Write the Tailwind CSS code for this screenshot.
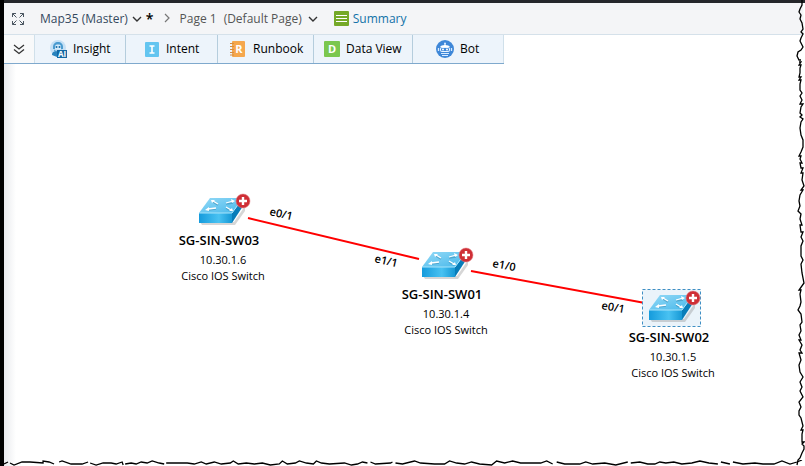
<!doctype html>
<html lang="en">
<head>
  <meta charset="UTF-8">
  <meta name="viewport" content="width=device-width, initial-scale=1.0">
  <title>Map35</title>
  <script src="https://cdn.jsdelivr.net/npm/@tailwindcss/browser@4"></script>
</head>
<body class="relative flex min-h-screen flex-col overflow-hidden border-l-4 border-black bg-white font-['Open_Sans',sans-serif] text-xs leading-5 text-black">
  <!-- Breadcrumb -->
  <header class="flex h-[35px] items-center border-t-3 border-b border-t-[#25272b] border-b-[#d5e1ea] bg-[#f4f5f7] pl-2 text-[#34495e]">
    <button aria-label="Full screen" class="mr-4 h-3 w-3">
      <svg class="h-3 w-3" viewBox="0 0 12 12" fill="none" stroke="#4a5560">
        <path d="M.5 4V.5H4M.5.5l4 4M8 .5h3.500V4M11.500.5l-4 4M.5 8v3.500H4M.5 11.500l4-4M8 11.500h3.500V8M11.500 11.500l-4-4"/>
      </svg>
    </button>
    <button class="flex items-center gap-1">
      Map35 (Master)
      <svg class="h-3 w-[10px]" viewBox="0 0 10 12" fill="none" stroke="#333" stroke-width="1.400"><path d="M1 4l4 4 4-4"/></svg>
    </button>
    <span class="ml-1 text-sm font-semibold text-black">*</span>
    <svg class="mr-[6px] ml-2 h-3 w-3" viewBox="0 0 12 12" fill="none" stroke="#777" stroke-width="1.200"><path d="M3 1l4 4-4 4"/></svg>
    <button class="flex items-center gap-1 text-[#555]">
      <span class="mr-[3px]">Page 1</span>
      <span>(Default Page)</span>
      <svg class="ml-[2px] h-3 w-[10px]" viewBox="0 0 10 12" fill="none" stroke="#333" stroke-width="1.400"><path d="M1 4l4 4 4-4"/></svg>
    </button>
    <a href="#" class="ml-4 flex items-center gap-1 text-[#1272a8]">
      <svg class="h-[15px] w-[15px]" viewBox="0 0 15 15">
        <rect width="15" height="15" rx="1" fill="#75a928"/>
        <path d="M2 4.500h11M2 7.500h11M2 10.500h11" stroke="#fff"/>
      </svg>
      Summary
    </a>
  </header>

  <!-- Toolbar -->
  <nav class="flex h-[29px] self-start border-b border-[#7fa9cd] bg-[#edf4fb]">
    <button aria-label="Collapse" class="flex w-[31px] items-center justify-center border-r border-[#d0e0ea] bg-[#f8f9fa]">
      <svg class="h-3 w-3" viewBox="0 0 12 12" fill="none" stroke="#333" stroke-width="1.300"><path d="M1 2l5 4 5-4M1 6.500l5 4 5-4"/></svg>
    </button>
    <button class="flex w-[91px] items-center gap-[6px] border-r border-[#b5cddd] pl-[15px]">
      <svg class="h-[18px] w-[17px]" viewBox="0 0 17 18">
        <circle cx="8" cy="8" r="8" fill="#c5e0f5"/>
        <path d="M3 7c0-3 2-5 5-5s5 2 5 5v2H3z" fill="#4a9bd0"/>
        <path d="M5 7c0-2 1-2.500 3-2.500S11 5 11 7v2H5z" fill="#d3eafa"/>
        <circle cx="6.500" cy="7" r="1" fill="#176ca9"/><circle cx="9.500" cy="7" r="1" fill="#176ca9"/>
        <path d="M2 15c0-3 2-4 5-4v6z" fill="#2983bd"/>
        <path d="M4 10c2 2 6 2 8 0" fill="none" stroke="#4a9bd0"/>
        <rect x="7" y="10" width="10" height="8" fill="#1267a3"/>
        <text x="12" y="17" fill="#fff" font-size="8" font-weight="700" text-anchor="middle">AI</text>
      </svg>
      Insight
    </button>
    <button class="flex w-[92px] items-center gap-[7px] border-r border-[#b5cddd] pl-[19px]">
      <svg class="h-[15px] w-[14px]" viewBox="0 0 14 15">
        <rect width="14" height="15" rx="1" fill="#63c5f0"/>
        <path d="M4.500 4h5M7 4v7M4.500 11h5" stroke="#fff" stroke-width="1.600"/>
      </svg>
      Intent
    </button>
    <button class="flex w-[96px] items-center gap-2 border-r border-[#b5cddd] pl-3">
      <svg class="h-4 w-[15px]" viewBox="0 0 15 16">
        <rect x="2" width="13" height="16" rx="1" fill="#f5a74d"/>
        <path d="M0 2.500h4M0 5.500h4M0 8.500h4M0 11.500h4M0 14h4" stroke="#d28c45"/>
        <text x="9" y="12" fill="#fff" font-size="11" font-weight="700" text-anchor="middle">R</text>
      </svg>
      Runbook
    </button>
    <button class="flex w-[99px] items-center gap-[6px] border-r border-[#b5cddd] pl-[10px]">
      <svg class="h-4 w-4" viewBox="0 0 16 16">
        <rect width="16" height="16" rx="1" fill="#7ac74f"/>
        <text x="8" y="12" fill="#fff" font-size="11" font-weight="700" text-anchor="middle">D</text>
      </svg>
      Data View
    </button>
    <button class="flex w-[91px] items-center gap-[6px] border-r border-[#d0e0ea] pl-[23px]">
      <svg class="h-[18px] w-[18px]" viewBox="0 0 18 18">
        <circle cx="9" cy="9" r="9" fill="#3e87d8"/>
        <path d="M9 3v3M2.500 8v3M15.500 8v3" stroke="#d8ebff" stroke-width="1.300"/>
        <circle cx="9" cy="3.500" r="1" fill="#d8ebff"/>
        <path d="M4 7q1-2 5-2t5 2z" fill="#fff"/>
        <rect x="4" y="7" width="10" height="5" rx="2" fill="#e8f4ff"/>
        <rect x="5" y="8" width="8" height="3" rx="1" fill="#3e87d8"/>
        <circle cx="7" cy="9.500" r="1" fill="#fff"/><circle cx="11" cy="9.500" r="1" fill="#fff"/>
        <path d="M5 13.500h8M6 15.500h6" stroke="#d8ebff"/>
      </svg>
      Bot
    </button>
  </nav>

  <!-- Map canvas -->
  <main class="relative min-h-[400px] flex-1 bg-linear-to-r from-[#e9ebee] from-0% to-white to-[12px]">
    <svg class="absolute top-0 left-0 h-[400px] w-[760px]" viewBox="0 0 760 400">
      <defs>
        <linearGradient id="top" x1="0" y1="0" x2="1" y2="1">
          <stop offset="0" stop-color="#95daf7"/><stop offset="1" stop-color="#45b7ea"/>
        </linearGradient>
        <linearGradient id="front" x1="0" y1="0" x2="1" y2="0">
          <stop offset="0" stop-color="#159bdc"/><stop offset=".6" stop-color="#49c2f2"/><stop offset="1" stop-color="#1698d5"/>
        </linearGradient>
        <g id="switch">
          <path d="M1 25h34L46 9v5L36 28H3z" fill="#777" opacity=".3"/>
          <path d="M0 16h33v10H0z" fill="url(#front)"/>
          <path d="M33 16L44 1v8L33 26z" fill="#087db9"/>
          <path d="M11 1h33L33 16H0z" fill="url(#top)"/>
          <path d="M0 16h33L44 1" fill="none" stroke="#a8e4fb"/>
          <g stroke="#2d7fa5" stroke-width="1.500" opacity=".45" transform="translate(0 1)"><path d="M19 7l-5-3M27 6l7-1M17 11l-8 1M27 10l5 3"/></g>
          <g stroke="#fff" stroke-width="1.300" fill="#fff">
            <path d="M19 7l-5-3M27 6l7-2M17 11l-8 1M27 10l5 3"/>
            <path d="M12 3h4l-3 3zM36 4l-4-2 1 4zM6 13l4-3 0 4zM34 14l-4 0 3-3z" stroke="none"/>
          </g>
          <circle cx="44" cy="4" r="7" fill="#cf2f36" stroke="#e27b80" stroke-width=".5"/>
          <path d="M44 0v8M40 4h8" stroke="#fff" stroke-width="2.400"/>
        </g>
      </defs>
      <g stroke="#f00" stroke-width="2">
        <path d="M244 154L415 195"/>
        <path d="M467 207L641 239"/>
      </g>
      <g font-size="11" font-weight="600">
        <text transform="translate(265 151) rotate(13)">e0/1</text>
        <text transform="translate(370 198) rotate(13)">e1/1</text>
        <text transform="translate(488 203) rotate(10)">e1/0</text>
        <text transform="translate(597 245) rotate(10)">e0/1</text>
      </g>
    </svg>

    <div class="absolute top-[126px] left-[167px] flex w-[100px] flex-col items-center text-[11px] leading-4">
      <svg class="h-10 w-[60px]" viewBox="-8 -7 60 40"><use href="#switch"/></svg>
      <h2 class="pr-1 text-[13px] leading-5 font-semibold">SG-SIN-SW03</h2>
      <p class="pt-[2px] pl-1">10.30.1.6</p>
      <p class="pl-1">Cisco IOS Switch</p>
    </div>
    <div class="absolute top-[180px] left-[390px] flex w-[100px] flex-col items-center text-[11px] leading-4">
      <svg class="h-10 w-[60px]" viewBox="-8 -7 60 40"><use href="#switch"/></svg>
      <h2 class="pr-1 text-[13px] leading-5 font-semibold">SG-SIN-SW01</h2>
      <p class="pt-[2px] pl-1">10.30.1.4</p>
      <p class="pl-1">Cisco IOS Switch</p>
    </div>
    <div class="absolute top-[223px] left-[617px] flex w-[100px] flex-col items-center text-[11px] leading-4">
      <svg class="h-10 w-[60px]" viewBox="-8 -7 60 40">
        <rect x="-6.500" y="-4.500" width="58" height="37" fill="#eaf3fa" stroke="#3f8fc4" stroke-dasharray="3 2"/>
        <use href="#switch"/>
      </svg>
      <h2 class="pr-1 text-[13px] leading-5 font-semibold">SG-SIN-SW02</h2>
      <p class="pt-[2px] pl-1">10.30.1.5</p>
      <p class="pl-1">Cisco IOS Switch</p>
    </div>
  </main>

  <!-- Torn edges -->
  <svg class="absolute top-0 right-0 h-full w-[10px]" viewBox="0 0 10 466" preserveAspectRatio="none">
    <path d="M8 3L9 29L9 34L7 41L9 47L8 50L8 60H10V3z" fill="#fff"/>
    <path d="M7 0V5L5 9L4 12L6 15L5 19L7 23L8 29L6 32L8 34L6 38L5 41L8 47L6 50L3 52L2 56L4 60H6M4 62H6L4 65H6L5 68V73L4 77H6L4 80H6L5 84V90L7 93L5 96L7 100L5 104H8L6 107L5 113L7 115L5 117L8 119L6 122L5 128L6 135L8 140V147L6 152L4 156H6L5 159L7 163H5L6 168H8L6 173H8L7 180L9 186L6 190H8L5 195L4 201L5 206L3 211L6 214L5 219L7 225H5L6 232H8L6 237L8 241L6 246V256L8 260L6 264L7 273L9 283L4 290H6L5 294L6 302L5 306L3 310L6 314L7 322L5 325L6 331L4 335L6 340H4L7 345L5 350L7 353H4L6 360L4 365L5 372L8 377L5 382L7 387L5 391L8 397L4 402L6 407L4 411V415L6 418L8 426L6 430H8L7 434V442H9L7 444L9 446V449L7 453L5 458L3 460L2 465" fill="none" stroke="#000" stroke-width="1.300"/>
  </svg>
  <svg class="absolute bottom-0 left-0 h-[6px] w-full" viewBox="0 0 800 6" preserveAspectRatio="none" fill="none" stroke="#000" stroke-width="1.300">
    <path d="M0 4L4 2M6 3L10 5L18 2H26L39 3V1L45 2L50 4M55 2L58 1L67 4L78 4L84 2M86 3L92 5L99 3H107L112 4L118 2L119 5M121 4L127 3L132 4L137 2L143 3L148 1L155 3L160 4M162 3L169 3H183L190 4L197 2L202 4L210 2L217 4L226 3L229 1L234 4L242 3L250 4L258 3L266 5L275 4L278 1L283 4L291 3L295 1L302 3L309 4L312 1L317 3L325 4L340 3L347 5L353 4L358 2L363 3M366 2L371 4L386 3L388 2M391 3L398 4L406 2L410 1L416 3L430 4L440 4L445 1L452 3L460 4L467 2L475 4L487 5L492 1L500 3L508 1L516 3L525 3L536 3L542 1L548 4M552 2L560 4L575 4L581 2L588 4L600 3L611 5L623 2M626 3L635 2L643 4L650 4L655 2L661 3L669 2L677 4L687 3L695 1L704 3L713 4M716 2L725 4M728 2L738 4L750 3L758 4L769 4L777 1L785 4L792 2L797 0"/>
  </svg>
</body>
</html>
